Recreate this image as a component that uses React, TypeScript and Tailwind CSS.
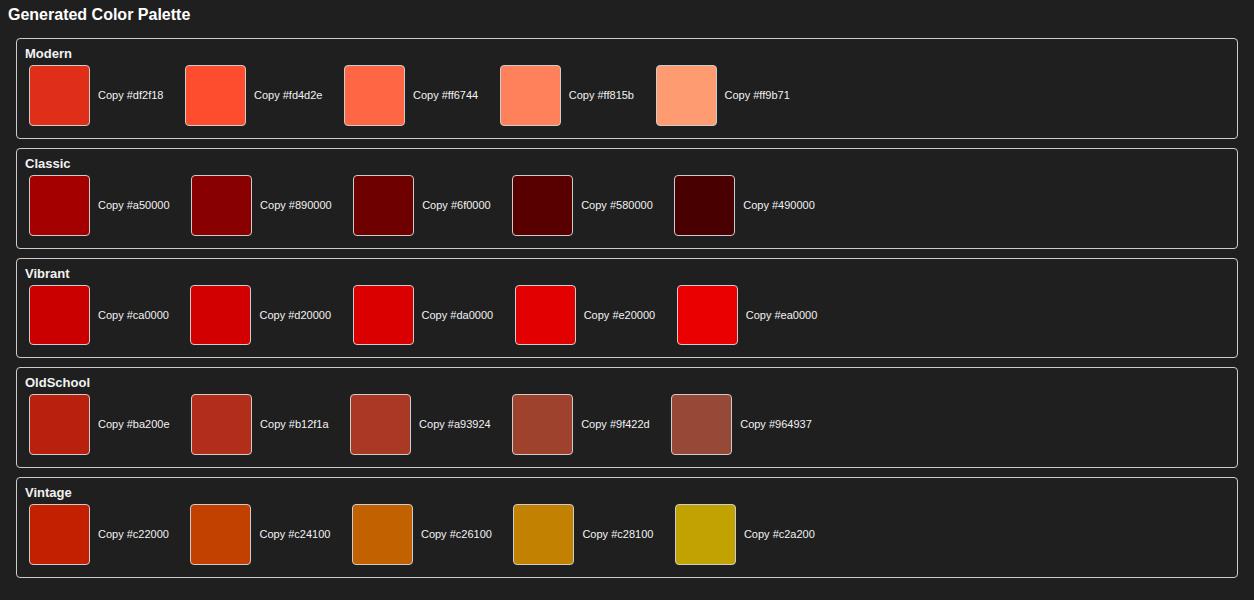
const palettes: { name: string; colors: string[] }[] = [
  { name: "Modern", colors: ["#df2f18", "#fd4d2e", "#ff6744", "#ff815b", "#ff9b71"] },
  { name: "Classic", colors: ["#a50000", "#890000", "#6f0000", "#580000", "#490000"] },
  { name: "Vibrant", colors: ["#ca0000", "#d20000", "#da0000", "#e20000", "#ea0000"] },
  { name: "OldSchool", colors: ["#ba200e", "#b12f1a", "#a93924", "#9f422d", "#964937"] },
  { name: "Vintage", colors: ["#c22000", "#c24100", "#c26100", "#c28100", "#c2a200"] },
];

function Swatch({ color }: { color: string }) {
  return (
    <div className="flex items-center">
      <div
        className="mx-1 h-[60.75px] w-[61px] rounded-[4px] border border-[#cccccc]"
        style={{ backgroundColor: color }}
      />
      <span className="pl-1 pr-[17.5px] text-[11px] text-[#f2f2f2]">Copy {color}</span>
    </div>
  );
}

export default function App() {
  return (
    <div
      className="min-h-screen bg-[#1f1f1f] px-2 pt-[6px] pb-4 text-white"
      style={{ fontFamily: '"Liberation Sans", Arial, sans-serif' }}
    >
      <h2 className="text-[16px] font-bold leading-[18px]">Generated Color Palette</h2>
      <div className="mt-[14px] flex flex-col gap-[9px]">
        {palettes.map((p) => (
          <div key={p.name} className="mx-2 rounded-[4px] border border-[#cccccc] p-2">
            <div className="text-[13px] font-bold leading-[14px] text-[#f2f2f2]">{p.name}</div>
            <div className="flex items-center py-1">
              {p.colors.map((c) => (
                <Swatch key={c} color={c} />
              ))}
            </div>
          </div>
        ))}
      </div>
    </div>
  );
}
